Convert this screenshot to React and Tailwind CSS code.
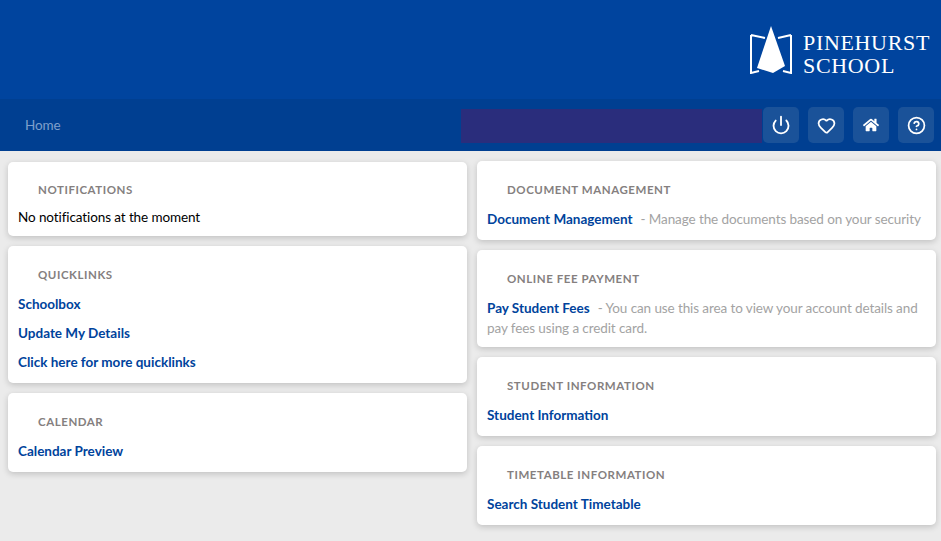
import { Power, Heart, CircleHelp } from 'lucide-react'
import { FaHome } from 'react-icons/fa'

const font = { fontFamily: '"Lato", "Noto Sans", sans-serif' }

function Card({ title, tight, children }) {
  return (
    <div className={`bg-white rounded-[5px] shadow-[0_2px_6px_rgba(0,0,0,0.18)] px-2.5 pb-[9px] ${tight ? 'pt-[19px]' : 'pt-5'}`}>
      <h2 className="pl-5 text-[11.5px] leading-[18px] font-bold tracking-[0.55px] uppercase text-[#857f7f]">{title}</h2>
      <div className={tight ? 'mt-2' : 'mt-2.5'}>{children}</div>
    </div>
  )
}

function NavButton({ children }) {
  return (
    <button className="w-9 h-9 rounded-[5px] bg-[#1a5299] text-white flex items-center justify-center">
      {children}
    </button>
  )
}

function CardLink({ children }) {
  return <a className="font-bold text-[#00439c] tracking-normal">{children}</a>
}

function Logo() {
  return (
    <svg width="43" height="48" viewBox="0 0 43 48" className="text-white">
      <path d="M1 9 L15 12 M41 9 L28 12 M1 9 V47 L9 45 M41 9 V47 L33 45" fill="none" stroke="currentColor" strokeWidth="2" />
      <path d="M21 0 L35 40 L23 47 L7 42 Z" fill="currentColor" />
    </svg>
  )
}

export default function App() {
  return (
    <div className="min-h-[541px] bg-[#ebebeb] text-[13.5px] leading-5 tracking-[-0.1px]" style={font}>
      <header className="h-[99px] bg-[#00449e] flex justify-end items-start pt-[26px] pr-[11px]">
        <div className="flex items-start gap-[10px]">
          <Logo />
          <div className="text-white text-[22px] leading-[23px] tracking-[0.03em] pt-[5px]" style={{ fontFamily: '"Liberation Serif", serif' }}>
            <div>PINEHURST</div>
            <div>SCHOOL</div>
          </div>
        </div>
      </header>
      <nav className="h-[52px] bg-[#003f91] flex items-center pl-[25px] pr-[7px]">
        <a className="text-[#7f9fcb] mr-auto">Home</a>
        <div className="w-[301px] h-[34px] bg-[#2a2d7c] self-end mb-2 mr-px" />
        <div className="flex gap-[9px]">
          <NavButton><Power size={20} strokeWidth={2.2} /></NavButton>
          <NavButton><Heart size={19} strokeWidth={2.2} /></NavButton>
          <NavButton><FaHome size={16} /></NavButton>
          <NavButton><CircleHelp size={19} strokeWidth={2.2} /></NavButton>
        </div>
      </nav>
      <main className="grid grid-cols-[459px_459px] gap-x-[10px] pl-2 pt-[10px]">
        <div className="flex flex-col gap-[10px] pt-px">
          <Card title="Notifications" tight>
            <p className="text-black">No notifications at the moment</p>
          </Card>
          <Card title="Quicklinks">
            <div className="flex flex-col gap-[9px] pb-0.5">
              <CardLink>Schoolbox</CardLink>
              <CardLink>Update My Details</CardLink>
              <CardLink>Click here for more quicklinks</CardLink>
            </div>
          </Card>
          <Card title="Calendar">
            <div className="pb-0.5"><CardLink>Calendar Preview</CardLink></div>
          </Card>
        </div>
        <div className="flex flex-col gap-[10px]">
          <Card title="Document Management">
            <p className="pb-0.5">
              <CardLink>Document Management</CardLink>
              <span className="text-[#a3a3a3] ml-2">- Manage the documents based on your security</span>
            </p>
          </Card>
          <Card title="Online Fee Payment">
            <p>
              <CardLink>Pay Student Fees</CardLink>
              <span className="text-[#a3a3a3] ml-2">- You can use this area to view your account details and pay fees using a credit card.</span>
            </p>
          </Card>
          <Card title="Student Information">
            <div className="pb-0.5"><CardLink>Student Information</CardLink></div>
          </Card>
          <Card title="Timetable Information">
            <div className="pb-0.5"><CardLink>Search Student Timetable</CardLink></div>
          </Card>
        </div>
      </main>
    </div>
  )
}
